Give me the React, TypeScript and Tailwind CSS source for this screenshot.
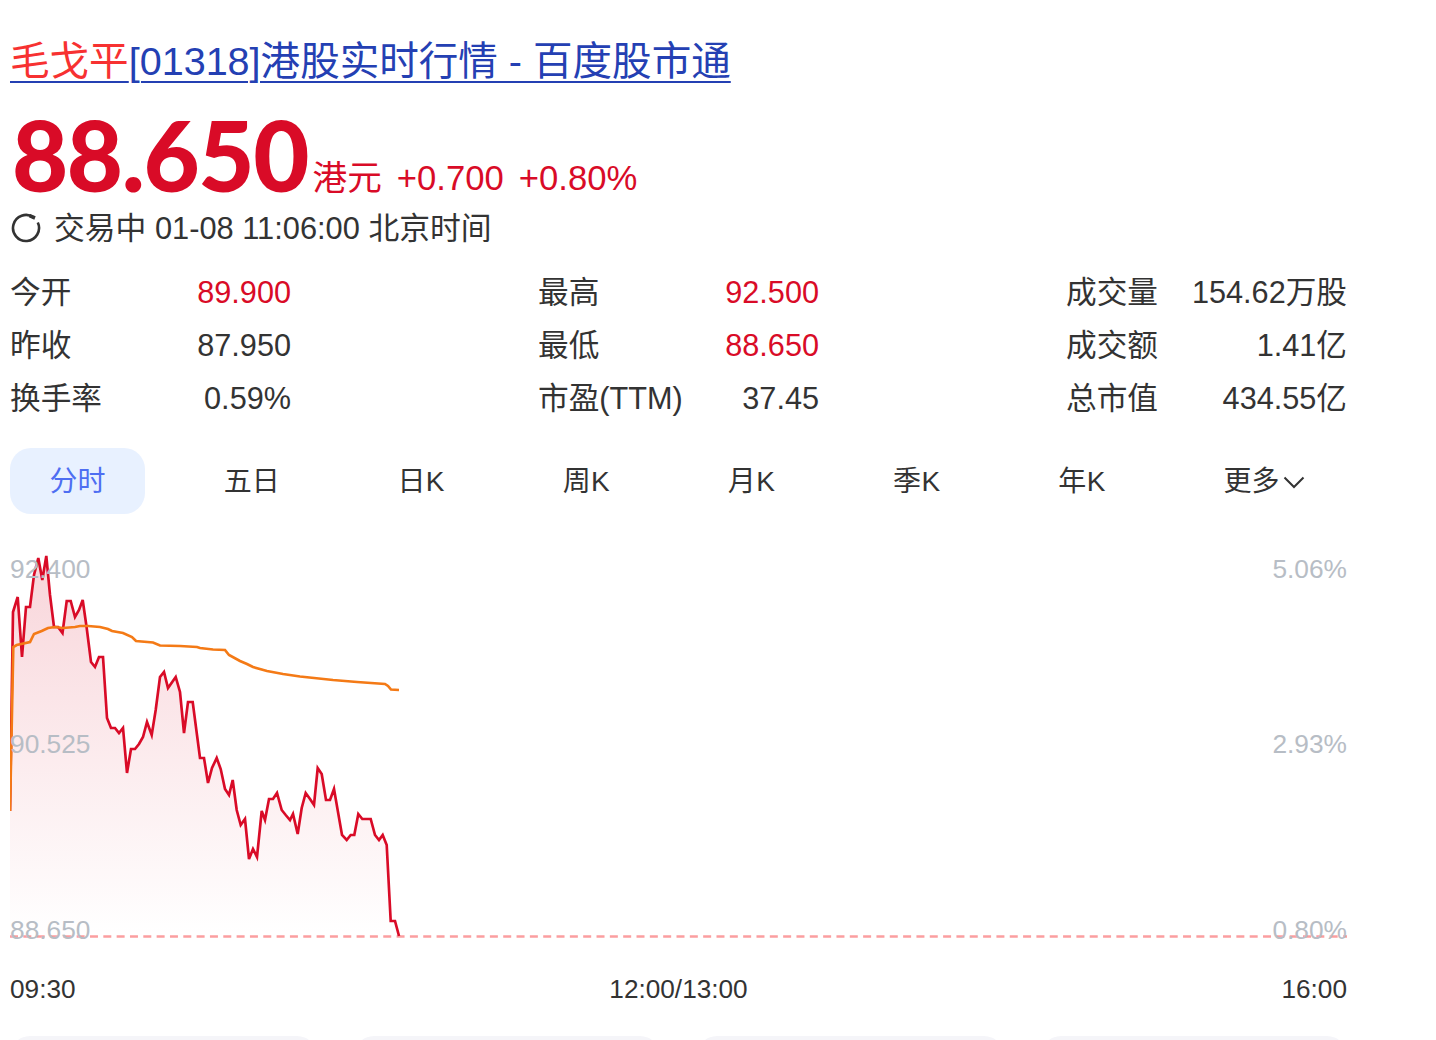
import React from "react";

const red: [number, number][] = [[10,811],[13,612],[17.7,597],[22,657],[26,607],[30,607],[34,575],[38.3,558],[42.3,580],[46.3,556],[50,595],[54,627],[58,627],[62.5,633],[66.7,601],[70.7,601],[75,617],[79,610],[82.7,600],[86.7,628],[91,662],[95,667],[99,657],[103,657],[107,718],[111,728],[115,728],[119,733],[123,728],[127,773],[131,749],[135,749],[139,744],[143,737],[147,722],[151.7,735],[155.7,710],[160,677],[164,672],[168,688],[175.7,677],[180,692],[184,733],[188,702],[192.7,702],[197,735],[200,758],[204,758],[208,783],[212,768],[216.7,758],[220.7,769],[225,789],[229,795],[232.7,780],[236.7,810],[240.7,825],[245,819],[249,859],[253,849],[257,857],[261.7,811],[265,820],[269,799],[273,799],[277,793],[281.7,810],[285.7,815],[290,820],[293,814],[297.7,834],[301.7,808],[305.7,793],[310,799],[314,805],[317.7,768],[321.7,774],[326,800],[330,800],[334,789],[338,812],[342,835],[346.7,840],[350.7,835],[354.3,835],[358.3,814],[362.3,819],[370.7,819],[375,835],[379,840],[382.7,835],[386.7,845],[390.7,921],[395,921],[399,936]];

const orange: [number, number][] = [[10,811],[13.3,647],[16.7,645],[30,642],[34,634],[41.7,631],[48,628],[55,627],[63,628],[75,627],[80,626],[88,626],[100,627],[108,629],[112,631],[123,633],[132,637],[136,641],[153,642.5],[160,645.5],[180,646],[197,647],[200,648],[213,649.5],[225,650],[229,655],[240,661],[247,664],[253,667],[267,671],[283,674],[300,676.5],[333,680],[357,682],[385,684],[388,686],[391,689.5],[399,690]];

const top = 540;
const toPts = (pts: [number, number][]) => pts.map(([x, y]) => `${x - 10},${y - top}`).join(" ");

function Stat({ label, value, hot }: { label: string; value: string; hot?: boolean }) {
  return (
    <div className="flex justify-between h-[53px] items-center">
      <span className="text-[#333333]">{label}</span>
      <span className={hot ? "text-[#d90b27]" : "text-[#333333]"}>{value}</span>
    </div>
  );
}

function Column({ rows }: { rows: { label: string; value: string; hot?: boolean }[] }) {
  return (
    <div className="w-[281px]">
      {rows.map((r) => (
        <Stat key={r.label} {...r} />
      ))}
    </div>
  );
}

const tabs = ["五日", "日K", "周K", "月K", "季K", "年K"];

export default function App() {
  return (
    <div className="h-[1040px] overflow-hidden bg-white font-['Liberation_Sans','Noto_Sans_CJK_SC',sans-serif]">
      <div className="ml-[10px] w-[1337px] pt-[36px]">
        <h1 className="text-[39.55px] leading-[50px] font-normal text-[#2440b3] underline underline-offset-[6px] decoration-[2px] whitespace-nowrap">
          <span className="text-[#f73131]">毛戈平</span>[01318]港股实时行情 - 百度股市通
        </h1>

        <div className="mt-[19px] flex items-end h-[100px] text-[#d90b27] whitespace-nowrap">
          <span className="ml-[2px] text-[97px] leading-[100px] font-black font-['Lato',sans-serif] tracking-[-1.4px]">88.650</span>
          <span className="text-[34.67px] leading-[40px] mb-[7px] ml-[4.5px]">港元</span>
          <span className="text-[34.67px] leading-[40px] mb-[7px] ml-[15px]">+0.700</span>
          <span className="text-[34.67px] leading-[40px] mb-[7px] ml-[15px]">+0.80%</span>
        </div>

        <div className="mt-[1px] flex items-center h-[46px] text-[30.8px] text-[#333333] whitespace-nowrap">
          <svg width="30" height="30" viewBox="0 0 30 30" fill="none" className="ml-[1px] mr-[13px] mb-[2px]">
            <path d="M26.8 9.5A13 13 0 1 1 22.5 4.35" stroke="#333333" strokeWidth="2.6" />
            <path d="M18.5 2.7L24 5" stroke="#333333" strokeWidth="3.6" />
          </svg>
          交易中 01-08 11:06:00 北京时间
        </div>

        <div className="mt-[13px] flex justify-between text-[30.67px] whitespace-nowrap">
          <Column rows={[{ label: "今开", value: "89.900", hot: true }, { label: "昨收", value: "87.950" }, { label: "换手率", value: "0.59%" }]} />
          <Column rows={[{ label: "最高", value: "92.500", hot: true }, { label: "最低", value: "88.650", hot: true }, { label: "市盈(TTM)", value: "37.45" }]} />
          <Column rows={[{ label: "成交量", value: "154.62万股" }, { label: "成交额", value: "1.41亿" }, { label: "总市值", value: "434.55亿" }]} />
        </div>

        <div className="mt-[24px] flex justify-between text-[28px] text-[#333333] whitespace-nowrap">
          <div className="h-[66px] w-[135px] pt-[2px] flex items-center justify-center rounded-[21px] bg-[#e8f1ff] text-[#4e6ef2]">分时</div>
          {tabs.map((t) => (
            <div key={t} className={`h-[66px] pt-[2px] flex items-center ${t === "五日" ? "pl-[41px] pr-[40px]" : "px-[40px] tracking-[0.4px]"}`}>{t}</div>
          ))}
          <div className="h-[66px] pl-[40px] pr-[40.5px] pt-[2px] flex items-center">
            更多
            <svg width="24" height="24" viewBox="0 0 24 24" fill="none" className="ml-[3px]">
              <path d="M2.5 7.5l9.5 9.5 9.5-9.5" stroke="#333333" strokeWidth="2" />
            </svg>
          </div>
        </div>

        <div className="relative mt-[26px] h-[410px]">
          <svg width="1337" height="410" viewBox="0 0 1337 410" className="block">
            <defs>
              <linearGradient id="area" x1="0" y1="0" x2="0" y2="1">
                <stop offset="0" stopColor="#d90b27" stopOpacity="0.17" />
                <stop offset="1" stopColor="#d90b27" stopOpacity="0" />
              </linearGradient>
            </defs>
            <polygon points={`0,396 ${toPts(red)} 389,396`} fill="url(#area)" />
            <line x1="0" y1="396.5" x2="1337" y2="396.5" stroke="#fb9ea0" strokeWidth="2.67" strokeDasharray="8 5.33" />
            <polyline points={toPts(red)} fill="none" stroke="#d90b27" strokeWidth="2.67" />
            <polyline points={toPts(orange)} fill="none" stroke="#f47a16" strokeWidth="2.67" />
          </svg>
          <div className="absolute inset-0 text-[26.3px] text-[#b7bdc5] leading-[30px]">
            <span className="absolute left-0 top-[14px]">92.400</span>
            <span className="absolute right-0 top-[14px]">5.06%</span>
            <span className="absolute left-0 top-[189px]">90.525</span>
            <span className="absolute right-0 top-[189px]">2.93%</span>
            <span className="absolute left-0 top-[375px]">88.650</span>
            <span className="absolute right-0 top-[375px]">0.80%</span>
          </div>
        </div>

        <div className="mt-[24px] flex justify-between text-[26.2px] leading-[30px] text-[#333333]">
          <span>09:30</span>
          <span>12:00/13:00</span>
          <span>16:00</span>
        </div>

        <div className="mt-[32px] grid grid-cols-4 gap-[37px]">
          <div className="h-[40px] rounded-[20px] bg-[#f5f5f9]" />
          <div className="h-[40px] rounded-[20px] bg-[#f5f5f9]" />
          <div className="h-[40px] rounded-[20px] bg-[#f5f5f9]" />
          <div className="h-[40px] rounded-[20px] bg-[#f5f5f9]" />
        </div>
      </div>
    </div>
  );
}
